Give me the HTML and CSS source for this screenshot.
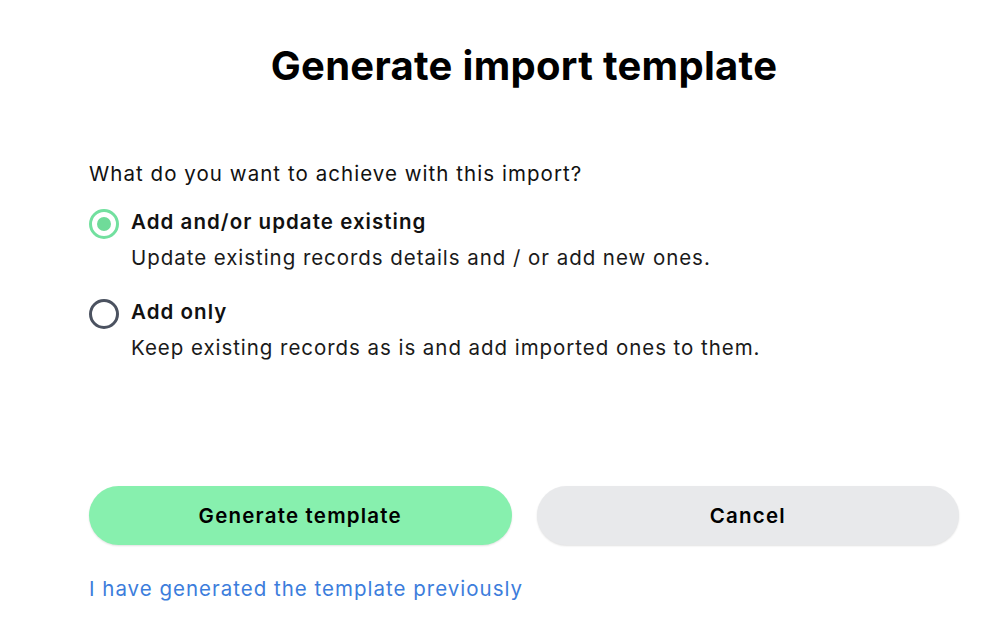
FILE: index.html
```html
<!DOCTYPE html>
<html lang="en">
<head>
    <meta charset="UTF-8">
    <meta name="viewport" content="width=device-width, initial-scale=1.0">
    <title>Generate import template</title>
    <link rel="stylesheet" href="styles.css">
</head>

<body>
    <div class="dialog">
        <h1 class="title">Generate import template</h1>

        <p class="question">What do you want to achieve with this import?</p>

        <div class="options">
            <label class="option">
                <input type="radio" name="mode" value="upsert" checked>
                <span class="radio"></span>
                <span class="option-text">
                    <span class="option-name">Add and/or update existing</span>
                    <span class="option-desc">Update existing records details and / or add new ones.</span>
                </span>
            </label>

            <label class="option">
                <input type="radio" name="mode" value="add">
                <span class="radio"></span>
                <span class="option-text">
                    <span class="option-name">Add only</span>
                    <span class="option-desc">Keep existing records as is and add imported ones to them.</span>
                </span>
            </label>
        </div>

        <div class="actions">
            <button class="btn btn-primary">Generate template</button>
            <button class="btn btn-secondary">Cancel</button>
        </div>

        <a class="link" href="#">I have generated the template previously</a>
    </div>
</body>
</html>
```

FILE: styles.css
```css
body {
    margin          : 0;
    background-color: #ffffff;
    color           : #111111;
    font-family     : Inter, "Noto Sans", sans-serif;
}

.dialog {
    width   : 870px;
    padding : 40px 0 0 89px;
}

.title {
    margin        : 0;
    text-align    : center;
    font-size     : 40px;
    font-weight   : 700;
    letter-spacing: 0.3px;
    line-height   : 52px;
    color         : #000000;
}

.question {
    margin        : 68px 0 0;
    font-size     : 20.5px;
    letter-spacing: 1.05px;
    line-height   : 28px;
}

.options {
    display       : flex;
    flex-direction: column;
    gap           : 26px;
    margin-top    : 20px;
}

.option {
    display: flex;
    gap    : 12px;
    cursor : pointer;
}

.option input {
    display: none;
}

.radio {
    flex           : none;
    width          : 24px;
    height         : 24px;
    margin-top     : 1px;
    border         : 3px solid #4b5260;
    border-radius  : 50%;
    display        : flex;
    align-items    : center;
    justify-content: center;
}

.option input:checked + .radio {
    border-color: #72e09f;
}

.option input:checked + .radio::after {
    content      : "";
    width        : 14px;
    height       : 14px;
    border-radius: 50%;
    background   : #6fdb99;
}

.option-text {
    display       : flex;
    flex-direction: column;
    gap           : 8px;
}

.option-name {
    font-size     : 20.5px;
    font-weight   : 600;
    letter-spacing: 1.05px;
    line-height   : 28px;
}

.option-desc {
    font-size     : 20.5px;
    letter-spacing: 0.95px;
    line-height   : 28px;
    color         : #1a1a1a;
}

.actions {
    display              : grid;
    grid-template-columns: 1fr 1fr;
    gap                  : 25px;
    margin-top           : 124px;
}

.btn {
    height        : 59px;
    border        : none;
    border-radius : 30px;
    font-family   : inherit;
    font-size     : 20.5px;
    font-weight   : 600;
    letter-spacing: 1.2px;
    color         : #000000;
    box-shadow    : 0 1px 2px rgba(0, 0, 0, 0.12);
    cursor        : pointer;
}

.btn-primary {
    background-color: #87f0ae;
}

.btn-secondary {
    background-color: #e8e9eb;
}

.link {
    display        : inline-block;
    margin-top     : 30px;
    font-size      : 20.5px;
    letter-spacing : 1px;
    line-height    : 28px;
    color          : #3c7ddc;
    text-decoration: none;
}
```
